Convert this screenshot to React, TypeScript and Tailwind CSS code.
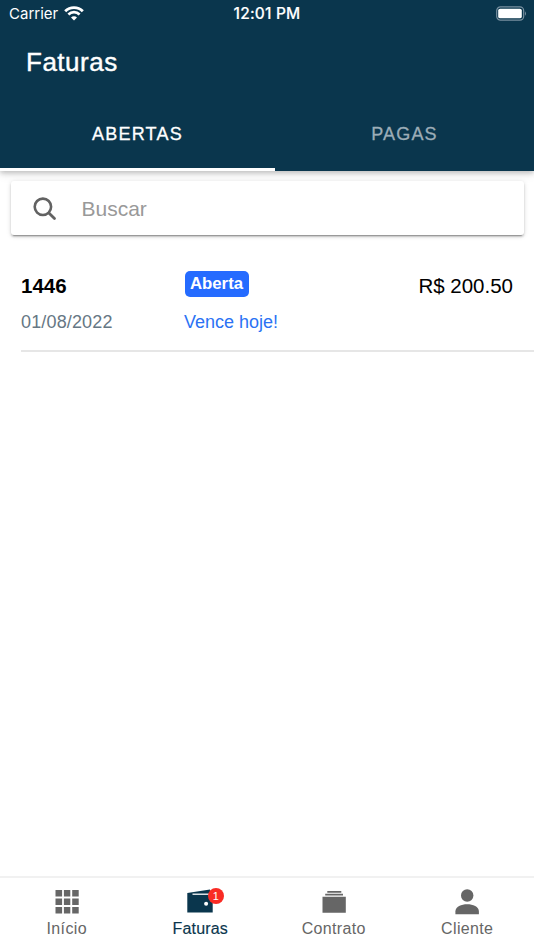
import React from 'react';

function StatusBar() {
  return (
    <div className="grid h-7 grid-cols-3 items-center pl-[9px] pr-[7px] font-['Inter',sans-serif] text-[15px] leading-[28px] text-white">
      <div className="flex items-center gap-[6px]">
        <span>Carrier</span>
        <svg width="20" height="15" viewBox="0 0 20 15" fill="none" stroke="currentColor" className="-mt-[2px]">
          <path d="M1.2 5.2 A12.6 12.6 0 0 1 18.8 5.2" strokeWidth="2.9" />
          <path d="M4.4 8.5 A8 8 0 0 1 15.6 8.5" strokeWidth="2.7" />
          <path d="M10 14.4 L7 11.5 A4.2 4.2 0 0 1 13 11.5 Z" fill="currentColor" stroke="none" />
        </svg>
      </div>
      <span className="-ml-[2px] text-center text-[15.5px] font-medium tracking-[0.2px] whitespace-nowrap [-webkit-text-stroke:0.15px_white]">12:01 PM</span>
      <svg width="32" height="15" viewBox="0 0 32 15" className="-mt-[2px] justify-self-end">
        <rect x="1.7" y="0.9" width="27" height="13.2" rx="3.8" fill="none" stroke="#7890a0" strokeWidth="1.2" />
        <rect x="3.2" y="2.7" width="23.6" height="9.6" rx="1.9" fill="white" />
        <path d="M30 5.2 Q32 7.5 30 9.8 Z" fill="#7890a0" />
      </svg>
    </div>
  );
}

function Tab({ label, active }: { label: string; active?: boolean }) {
  return (
    <div
      className={
        active
          ? 'flex w-[275px] justify-center border-b-[3px] border-white pt-[26px] text-white'
          : 'flex flex-1 justify-center border-b-[3px] border-transparent pt-[26px] text-[#9cadb7]'
      }
    >
      <span className="text-[18px] leading-[22px] tracking-[1.2px] [-webkit-text-stroke:0.3px_currentColor]">{label}</span>
    </div>
  );
}

function NavItem({ label, active, children }: { label: string; active?: boolean; children: React.ReactNode }) {
  return (
    <div className={active ? 'flex flex-1 flex-col items-center pt-[9px] text-[#0a364d]' : 'flex flex-1 flex-col items-center pt-[9px] text-[#666666]'}>
      <div className="relative h-[32px] w-[32px]">{children}</div>
      <span className={active ? 'text-[16px] leading-[20px] tracking-[0.2px] [-webkit-text-stroke:0.15px_currentColor]' : 'text-[16px] leading-[20px] tracking-[0.35px]'}>{label}</span>
    </div>
  );
}

export default function App() {
  return (
    <div className="flex h-[950px] w-[534px] flex-col overflow-hidden bg-white font-['Liberation_Sans',Arial,sans-serif]">
      <header className="flex h-[171px] shrink-0 flex-col bg-[#0a364d] shadow-[0_2px_5px_rgba(0,0,0,0.22),0_5px_9px_rgba(0,0,0,0.06)]">
        <StatusBar />
        <h1 className="pt-[18px] pl-[26px] text-[26px] leading-[32px] tracking-[0.5px] text-white [-webkit-text-stroke:0.4px_white]">Faturas</h1>
        <div className="mt-auto flex h-[74px]">
          <Tab label="ABERTAS" active />
          <Tab label="PAGAS" />
        </div>
      </header>

      <main className="flex-1">
        <div className="mx-[10.5px] mt-[10px] flex h-[54px] items-center rounded-[3px] bg-white pt-px pl-[22.5px] shadow-[0_3px_1px_-2px_rgba(0,0,0,0.25),0_2px_2px_rgba(0,0,0,0.16),0_1px_5px_rgba(0,0,0,0.15)]">
          <svg width="24" height="24" viewBox="0 0 24 24" fill="none" stroke="#626262" strokeLinecap="round">
            <circle cx="9.9" cy="9.8" r="8.2" strokeWidth="2.6" />
            <path d="M15.9 16 L21.5 21.6" strokeWidth="2.8" />
          </svg>
          <span className="ml-[24.5px] text-[21px] leading-[26px] text-[#999999]">Buscar</span>
        </div>

        <div className="ml-[21px] mt-[25px] flex h-[92px] border-b-2 border-[#e6e6e6] pr-[21px]">
          <div className="w-[164px] pt-[13px]">
            <div className="text-[20.5px] leading-[26px] font-bold">1446</div>
            <div className="mt-[12px] text-[18px] leading-[22px] tracking-[0.15px] text-[#667784]">01/08/2022</div>
          </div>
          <div className="flex-1 pt-[11px]">
            <div className="flex h-[26px] w-[64px] items-center justify-center rounded-[5px] bg-[#256bff] pr-px text-[16.8px] leading-[26px] font-bold text-white">Aberta</div>
            <div className="mt-[14px] -ml-px text-[18px] leading-[22px] text-[#2b72f4]">Vence hoje!</div>
          </div>
          <div className="pt-[13px] text-[20.5px] leading-[26px] text-black">R$ 200.50</div>
        </div>
      </main>

      <nav className="flex h-[74px] shrink-0 border-t-2 border-[#f1f1f1]">
        <NavItem label="Início">
          <svg width="32" height="32" viewBox="0 0 32 32" fill="currentColor">
            <path d="M4.5 3h6.6v6.6H4.5zM12.9 3h6.4v6.6h-6.4zM21.2 3h6.5v6.6h-6.5zM4.5 11.4h6.6v6.7H4.5zM12.9 11.4h6.4v6.7h-6.4zM21.2 11.4h6.5v6.7h-6.5zM4.5 19.9h6.6v6.7H4.5zM12.9 19.9h6.4v6.7h-6.4zM21.2 19.9h6.5v6.7h-6.5z" />
          </svg>
        </NavItem>
        <NavItem label="Faturas" active>
          <svg width="32" height="32" viewBox="0 0 32 32" fill="none">
            <path d="M3.3 6.1 L26 2.4 V5 H28.7 V25.6 H3.3 Z" fill="currentColor" />
            <path d="M8.5 7.2 H26.5" stroke="white" strokeWidth="1.3" />
            <circle cx="22.1" cy="16.7" r="2" fill="white" />
          </svg>
          <span className="absolute left-[23.5px] top-[1px] flex h-4 w-4 items-center justify-center rounded-full bg-[#f92b24] text-[11px] leading-[16px] text-white">1</span>
        </NavItem>
        <NavItem label="Contrato">
          <svg width="32" height="32" viewBox="0 0 32 32" fill="currentColor">
            <path d="M9.3 4h14v1.8h-14zM7.2 6.8h17.8v1.8H7.2zM4.5 9.7h23.3v16.1H4.5z" />
          </svg>
        </NavItem>
        <NavItem label="Cliente">
          <svg width="32" height="32" viewBox="0 0 32 32" fill="currentColor">
            <circle cx="16.2" cy="8.5" r="6.2" />
            <path d="M4.4 27.3V24.4C4.4 19.7 10.4 17.2 16.2 17.2S27.9 19.7 27.9 24.4V27.3Z" />
          </svg>
        </NavItem>
      </nav>
    </div>
  );
}
